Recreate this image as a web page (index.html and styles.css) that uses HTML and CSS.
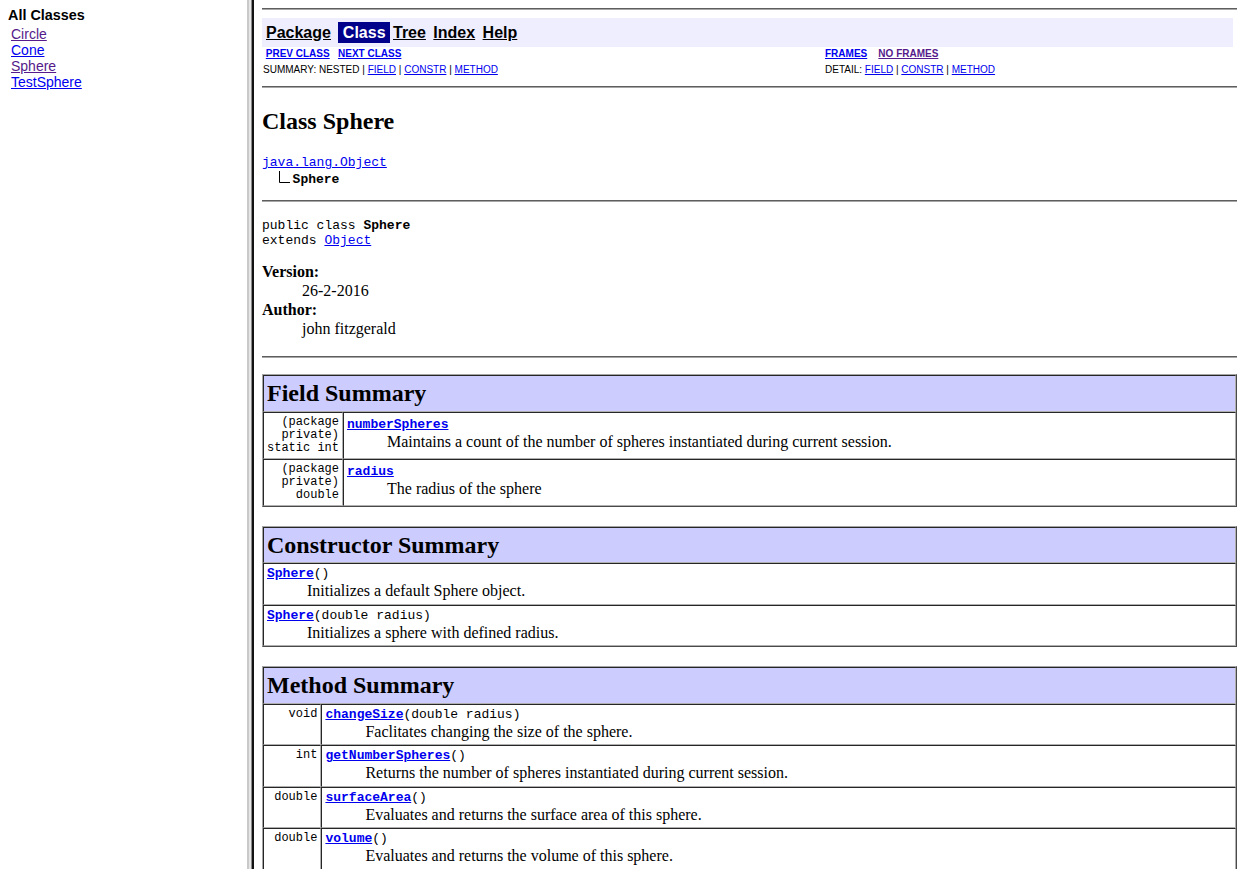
FILE: index.html
```html
<!DOCTYPE html>
<html lang="en">
<head>
<meta charset="utf-8">
<title>Sphere</title>
<link rel="stylesheet" href="styles.css">
</head>
<body>
<div class="frames">
  <nav class="left-frame">
    <div class="frame-heading">All Classes</div>
    <ul class="class-list">
      <li><a href="#" class="visited">Circle</a></li>
      <li><a href="#">Cone</a></li>
      <li><a href="#" class="visited">Sphere</a></li>
      <li><a href="#">TestSphere</a></li>
    </ul>
  </nav>
  <div class="divider"></div>
  <main class="right-frame">
    <hr class="rule">
    <div class="navbar">
      <span class="nav-cell"><a href="#" class="nav-link">Package</a>&nbsp;</span>
      <span class="nav-cell nav-cell-current">&nbsp;Class&nbsp;</span>
      <span class="nav-cell"><a href="#" class="nav-link">Tree</a>&nbsp;</span>
      <span class="nav-cell"><a href="#" class="nav-link">Index</a>&nbsp;</span>
      <span class="nav-cell"><a href="#" class="nav-link">Help</a>&nbsp;</span>
    </div>
    <div class="subnav">
      <div class="subnav-cell">&nbsp;<a href="#"><b>PREV CLASS</b></a>&nbsp; &nbsp;<a href="#"><b>NEXT CLASS</b></a></div>
      <div class="subnav-cell"><a href="#"><b>FRAMES</b></a> &nbsp; &nbsp;<a href="#" class="visited"><b>NO FRAMES</b></a></div>
      <div class="subnav-cell subnav-last">SUMMARY:&nbsp;NESTED&nbsp;|&nbsp;<a href="#">FIELD</a>&nbsp;|&nbsp;<a href="#">CONSTR</a>&nbsp;|&nbsp;<a href="#">METHOD</a></div>
      <div class="subnav-cell subnav-last">DETAIL:&nbsp;<a href="#">FIELD</a>&nbsp;|&nbsp;<a href="#">CONSTR</a>&nbsp;|&nbsp;<a href="#">METHOD</a></div>
    </div>
    <hr class="rule">

    <h2 class="class-title">Class Sphere</h2>
    <pre class="inheritance"><a href="#">java.lang.Object</a>
  <svg class="inherit-icon" width="15" height="13" viewBox="0 0 15 13" aria-label="extended by"><path d="M1.5 1 V12.5 H12" fill="none" stroke="#000" stroke-width="1"/></svg><b>Sphere</b></pre>
    <hr class="rule">

    <div class="class-sig">public class <b>Sphere</b><br>extends <a href="#">Object</a></div>

    <dl class="tags">
      <dt>Version:</dt>
      <dd>26-2-2016</dd>
      <dt>Author:</dt>
      <dd>john fitzgerald</dd>
    </dl>
    <hr class="rule">

    <table class="summary">
      <tr><th colspan="2" class="summary-head">Field Summary</th></tr>
      <tr>
        <td class="type-cell">(package private) static&nbsp;int</td>
        <td class="member-cell">
          <div class="member-sig"><a href="#"><b>numberSpheres</b></a></div>
          <div class="member-desc">Maintains a count of the number of spheres instantiated during current session.</div>
        </td>
      </tr>
      <tr>
        <td class="type-cell">(package private) double</td>
        <td class="member-cell">
          <div class="member-sig"><a href="#"><b>radius</b></a></div>
          <div class="member-desc">The radius of the sphere</div>
        </td>
      </tr>
    </table>

    <table class="summary">
      <tr><th class="summary-head">Constructor Summary</th></tr>
      <tr>
        <td class="member-cell">
          <div class="member-sig"><a href="#"><b>Sphere</b></a>()</div>
          <div class="member-desc">Initializes a default Sphere object.</div>
        </td>
      </tr>
      <tr>
        <td class="member-cell">
          <div class="member-sig"><a href="#"><b>Sphere</b></a>(double&nbsp;radius)</div>
          <div class="member-desc">Initializes a sphere with defined radius.</div>
        </td>
      </tr>
    </table>

    <table class="summary">
      <tr><th colspan="2" class="summary-head">Method Summary</th></tr>
      <tr>
        <td class="type-cell">&nbsp;void</td>
        <td class="member-cell">
          <div class="member-sig"><a href="#"><b>changeSize</b></a>(double&nbsp;radius)</div>
          <div class="member-desc">Faclitates changing the size of the sphere.</div>
        </td>
      </tr>
      <tr>
        <td class="type-cell">&nbsp;int</td>
        <td class="member-cell">
          <div class="member-sig"><a href="#"><b>getNumberSpheres</b></a>()</div>
          <div class="member-desc">Returns the number of spheres instantiated during current session.</div>
        </td>
      </tr>
      <tr>
        <td class="type-cell">&nbsp;double</td>
        <td class="member-cell">
          <div class="member-sig"><a href="#"><b>surfaceArea</b></a>()</div>
          <div class="member-desc">Evaluates and returns the surface area of this sphere.</div>
        </td>
      </tr>
      <tr>
        <td class="type-cell">&nbsp;double</td>
        <td class="member-cell">
          <div class="member-sig"><a href="#"><b>volume</b></a>()</div>
          <div class="member-desc">Evaluates and returns the volume of this sphere.</div>
        </td>
      </tr>
    </table>
  </main>
</div>
</body>
</html>
```
FILE: styles.css
```css
* { box-sizing: border-box; }

html, body {
  margin: 0;
  padding: 0;
  background: #ffffff;
}

body {
  font-family: "Liberation Serif", "Times New Roman", serif;
  font-size: 16px;
  color: #000000;
  overflow: hidden;
}

a { color: #0000ee; text-decoration: underline; }
a.visited { color: #551a8b; }

.frames {
  display: flex;
  height: 869px;
  overflow: hidden;
}

/* ---------- left frame ---------- */
.left-frame {
  width: 247px;
  flex: none;
  padding: 7px 0 0 8px;
  font-family: "Liberation Sans", Arial, sans-serif;
}

.frame-heading {
  font-size: 14.4px;
  font-weight: bold;
  line-height: 16px;
}

.class-list {
  list-style: none;
  margin: 0;
  padding: 3px 0 0 3px;
  font-size: 14px;
  line-height: 16px;
}

/* ---------- frame border ---------- */
.divider {
  width: 7px;
  flex: none;
  background: linear-gradient(to right,
    #c9c9c9 0, #c9c9c9 2px,
    #e6e6e6 2px, #e6e6e6 4px,
    #8a8a8a 4px, #8a8a8a 5px,
    #121212 5px, #121212 7px);
}

/* ---------- right frame ---------- */
.right-frame {
  flex: 1;
  min-width: 0;
  padding: 0 8px;
  overflow: hidden;
}

.rule {
  height: 0;
  margin: 8px 0;
  border: 0;
  border-top: 1px solid #5e5e5e;
  border-bottom: 1px solid #a6a6a6;
}

.navbar {
  display: flex;
  gap: 3px;
  padding: 4px;
  margin-right: 4px;
  background: #eeeeff;
  font-family: "Liberation Sans", Arial, sans-serif;
  font-size: 16px;
  font-weight: bold;
  line-height: 21px;
}

.nav-link { color: #000000; }

.nav-cell-current {
  background: #00008b;
  color: #ffffff;
}

.subnav {
  display: grid;
  grid-template-columns: 562px 1fr;
  font-family: "Liberation Sans", Arial, sans-serif;
  font-size: 10px;
  line-height: 14px;
}

.subnav-cell {
  padding: 0 1px 2px;
  white-space: nowrap;
}

.subnav-cell.subnav-last { padding-bottom: 1px; }

.class-title {
  font-size: 24px;
  font-weight: bold;
  margin: 20px 0;
}

.inheritance {
  font-family: "Liberation Mono", "Courier New", monospace;
  font-size: 13px;
  margin: 13px 0;
}

.inherit-icon { vertical-align: baseline; }

.class-sig {
  margin: 16px 0 0;
  font-family: "Liberation Mono", "Courier New", monospace;
  font-size: 13px;
}

.tags {
  margin: 14px 0 18px;
  line-height: 19px;
}

.tags dt { font-weight: bold; }
.tags dd { margin: 0 0 0 40px; }

/* ---------- summary tables ---------- */
.summary {
  width: 100%;
  border-collapse: separate;
  border-spacing: 0;
  border: 1px solid;
  border-color: #a5a5a5 #4a4a4a #4a4a4a #a5a5a5;
  margin: 16px 0 19px;
}

.summary th,
.summary td {
  border: 1px solid;
  border-color: #262626 #b0b0b0 #b0b0b0 #262626;
  padding: 3px;
}

.summary-head {
  background: #ccccff;
  text-align: left;
  font-size: 24px;
  font-weight: bold;
  line-height: 28.5px;
}

.type-cell {
  width: 1%;
  text-align: right;
  vertical-align: top;
  font-family: "Liberation Mono", "Courier New", monospace;
  font-size: 12px;
  line-height: 13px;
}

.member-cell { vertical-align: middle; }

.member-sig {
  font-family: "Liberation Mono", "Courier New", monospace;
  font-size: 13px;
  line-height: 14px;
}

.member-desc {
  line-height: 19.5px;
  padding-left: 40px;
}
```
